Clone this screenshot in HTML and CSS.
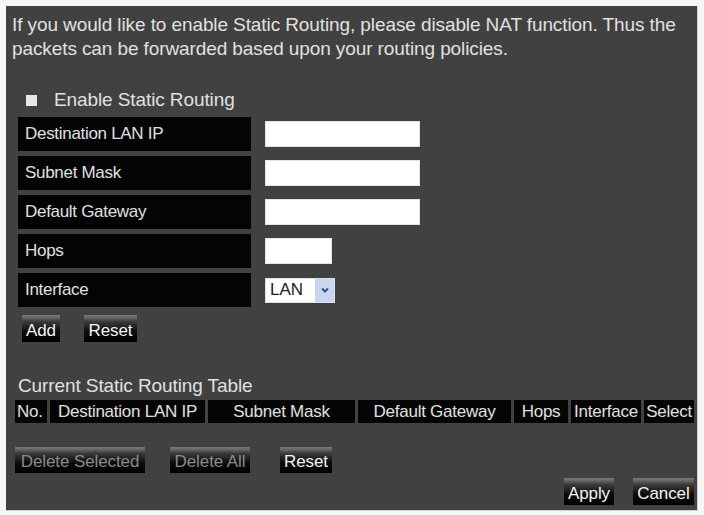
FILE: index.html
```html
<!DOCTYPE html>
<html>
<head>
<meta charset="utf-8">
<link rel="stylesheet" href="styles.css">
</head>
<body>
<div class="panel">
  <p class="intro">If you would like to enable Static Routing, please disable NAT function. Thus the packets can be forwarded based upon your routing policies.</p>
  <div class="enable"><span class="check"></span><span>Enable Static Routing</span></div>
  <div class="form">
    <div class="row"><div class="label">Destination LAN IP</div><input class="field wide" type="text"></div>
    <div class="row"><div class="label">Subnet Mask</div><input class="field wide" type="text"></div>
    <div class="row"><div class="label">Default Gateway</div><input class="field wide" type="text"></div>
    <div class="row"><div class="label">Hops</div><input class="field short" type="text"></div>
    <div class="row"><div class="label">Interface</div>
      <div class="select"><span class="sel-text">LAN</span><span class="sel-arrow"><svg width="10" height="8" viewBox="0 0 10 8"><path d="M2 2.5 L5 5.5 L8 2.5" fill="none" stroke="#3a4f8c" stroke-width="2"/></svg></span></div>
    </div>
  </div>
  <div class="btnrow first">
    <span class="btn w-add">Add</span>
    <span class="btn w-reset">Reset</span>
  </div>
  <div class="title">Current Static Routing Table</div>
  <div class="thead">
    <div class="th c-no left">No.</div>
    <div class="th c-dest">Destination LAN IP</div>
    <div class="th c-mask">Subnet Mask</div>
    <div class="th c-gw">Default Gateway</div>
    <div class="th c-hops">Hops</div>
    <div class="th c-if">Interface</div>
    <div class="th c-sel">Select</div>
  </div>
  <div class="btnrow del">
    <span class="btn disabled w-dsel">Delete Selected</span>
    <span class="btn disabled w-dall">Delete All</span>
    <span class="btn w-reset2">Reset</span>
  </div>
  <div class="btnrow final">
    <span class="btn w-apply">Apply</span>
    <span class="btn w-cancel">Cancel</span>
  </div>
</div>
</body>
</html>
```
FILE: styles.css
```css
html, body {
  margin: 0;
  padding: 0;
  background: #f6f6f6;
}
body {
  font-family: "Liberation Sans", Arial, sans-serif;
  color: #e0e0e0;
}
.panel {
  margin: 6px 6px 0 6px;
  width: 692px;
  height: 505px;
  background: #414141;
  box-sizing: border-box;
  padding-top: 7px;
  border-right: 1px solid #d0d0d0;
  border-bottom: 1px solid #d0d0d0;
}
.intro {
  margin: 0;
  padding: 0 6px;
  font-size: 19px;
  line-height: 24px;
  letter-spacing: -0.1px;
}
.enable {
  margin-top: 28px;
  height: 22px;
  display: flex;
  align-items: center;
  padding-left: 20px;
  font-size: 19px;
  letter-spacing: -0.1px;
}
.check {
  width: 11px;
  height: 11px;
  background: #e8e8ec;
  margin-right: 17px;
}
.form {
  margin-top: 6px;
  margin-left: 12px;
  display: flex;
  flex-direction: column;
  gap: 5px;
}
.row {
  display: flex;
  align-items: center;
  height: 34px;
}
.label {
  width: 233px;
  height: 34px;
  background: #040404;
  box-sizing: border-box;
  padding-left: 7px;
  display: flex;
  align-items: center;
  font-size: 17px;
  letter-spacing: -0.3px;
  margin-right: 14px;
}
.field {
  height: 26px;
  border: 1px solid #e4e4e4;
  background: #fff;
  box-sizing: border-box;
  padding: 0;
  margin: 0;
}
.wide { width: 155px; }
.short { width: 67px; }
.select {
  width: 70px;
  height: 25px;
  background: #fff;
  display: flex;
  align-items: center;
  box-sizing: border-box;
  border: 1px solid #e0e0e0;
}
.sel-text {
  flex: 1;
  color: #222;
  font-size: 17px;
  padding-left: 4px;
}
.sel-arrow {
  width: 19px;
  height: 23px;
  background: #c9d6f0;
  display: flex;
  align-items: center;
  justify-content: center;
}
.btnrow {
  display: flex;
}
.btnrow.first {
  margin-top: 8px;
  padding-left: 16px;
  gap: 24px;
}
.btn {
  height: 27px;
  box-sizing: border-box;
  display: flex;
  align-items: center;
  justify-content: center;
  padding-top: 4px;
  font-size: 17px;
  color: #f4f4f4;
  white-space: nowrap;
  letter-spacing: -0.1px;
  background: linear-gradient(#7a7a7a 0, #6a6a6a 8%, #3a3a3a 25%, #0c0c0c 60%, #000 100%);
}
.btn.disabled {
  color: #8a8a8a;
}
.w-add { width: 38px; }
.w-reset { width: 53px; }
.title {
  margin-top: 33px;
  padding-left: 12px;
  font-size: 19px;
  line-height: 22px;
  letter-spacing: -0.1px;
}
.thead {
  margin-top: 3px;
  margin-left: 9px;
  display: flex;
  gap: 3px;
  height: 23px;
}
.th {
  background: #050505;
  display: flex;
  align-items: center;
  justify-content: center;
  font-size: 17px;
  white-space: nowrap;
  letter-spacing: -0.25px;
}
.th.left { justify-content: flex-start; padding-left: 2px; box-sizing: border-box; }
.c-no { width: 32px; }
.c-dest { width: 155px; }
.c-mask { width: 147px; }
.c-gw { width: 153px; }
.c-hops { width: 54px; }
.c-if { width: 70px; }
.c-sel { width: 50px; }
.btnrow.del {
  margin-top: 24px;
  padding-left: 9px;
}
.btnrow.del .btn { height: 26px; }
.w-dsel { width: 130px; margin-right: 25px; }
.w-dall { width: 80px; margin-right: 30px; }
.w-reset2 { width: 52px; }
.btnrow.final {
  margin-top: 5px;
  justify-content: flex-end;
  padding-right: 3px;
  gap: 19px;
}
.w-apply { width: 50px; }
.w-cancel { width: 61px; }
```
